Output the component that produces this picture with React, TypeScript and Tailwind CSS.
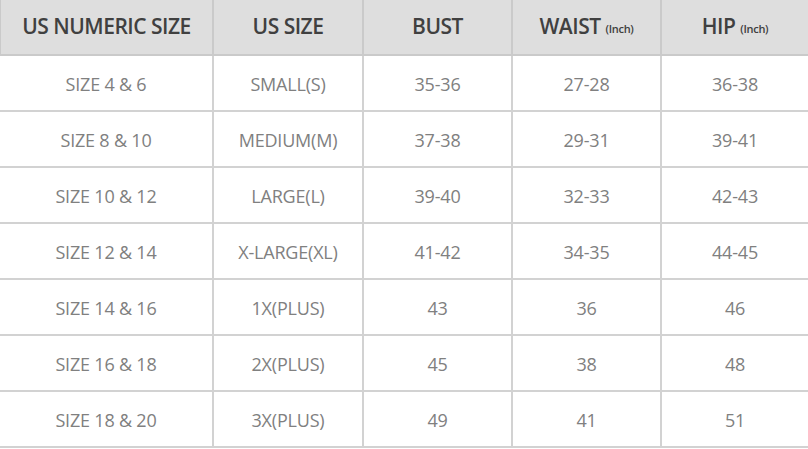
import React from "react";

const rows = [
  ["SIZE 4 & 6", "SMALL(S)", "35-36", "27-28", "36-38"],
  ["SIZE 8 & 10", "MEDIUM(M)", "37-38", "29-31", "39-41"],
  ["SIZE 10 & 12", "LARGE(L)", "39-40", "32-33", "42-43"],
  ["SIZE 12 & 14", "X-LARGE(XL)", "41-42", "34-35", "44-45"],
  ["SIZE 14 & 16", "1X(PLUS)", "43", "36", "46"],
  ["SIZE 16 & 18", "2X(PLUS)", "45", "38", "48"],
  ["SIZE 18 & 20", "3X(PLUS)", "49", "41", "51"],
];

const head = "h-[56px] pb-[1px] flex items-center justify-center bg-[#dedede] border-b-2 border-[#cacaca] text-[#404040] text-[21px] font-semibold tracking-[-0.5px]";

const App = () => {
  return (
    <div
      className="w-[808px] h-[449px] bg-white overflow-hidden"
      style={{ fontFamily: '"Open Sans", "Noto Sans", sans-serif' }}
    >
      <div className="grid grid-cols-[214px_150px_149px_149px_146px]">
        {/* header */}
        <div className={head + " border-r-2 border-l"}>US NUMERIC SIZE</div>
        <div className={head + " border-r-2"}>US SIZE</div>
        <div className={head + " border-r-2"}>BUST</div>
        <div className={head + " border-r-2"}>
          WAIST
          <span className="ml-[5px] mt-[6px] text-[11px] tracking-[-0.3px]">(Inch)</span>
        </div>
        <div className={head}>
          HIP
          <span className="ml-[5px] mt-[6px] text-[11px] tracking-[-0.3px]">(Inch)</span>
        </div>

        {rows.map((row, i) =>
          row.map((cell, j) => (
            <div
              key={i + "-" + j}
              className={
                "h-[56px] pt-[3px] flex items-center justify-center border-b-2 border-[#d2d2d2] text-[#808080] text-[18px] tracking-[-0.2px] " +
                (j < 4 ? "border-r-2" : "")
              }
            >
              {cell}
            </div>
          ))
        )}
      </div>
    </div>
  );
};

export default App;
